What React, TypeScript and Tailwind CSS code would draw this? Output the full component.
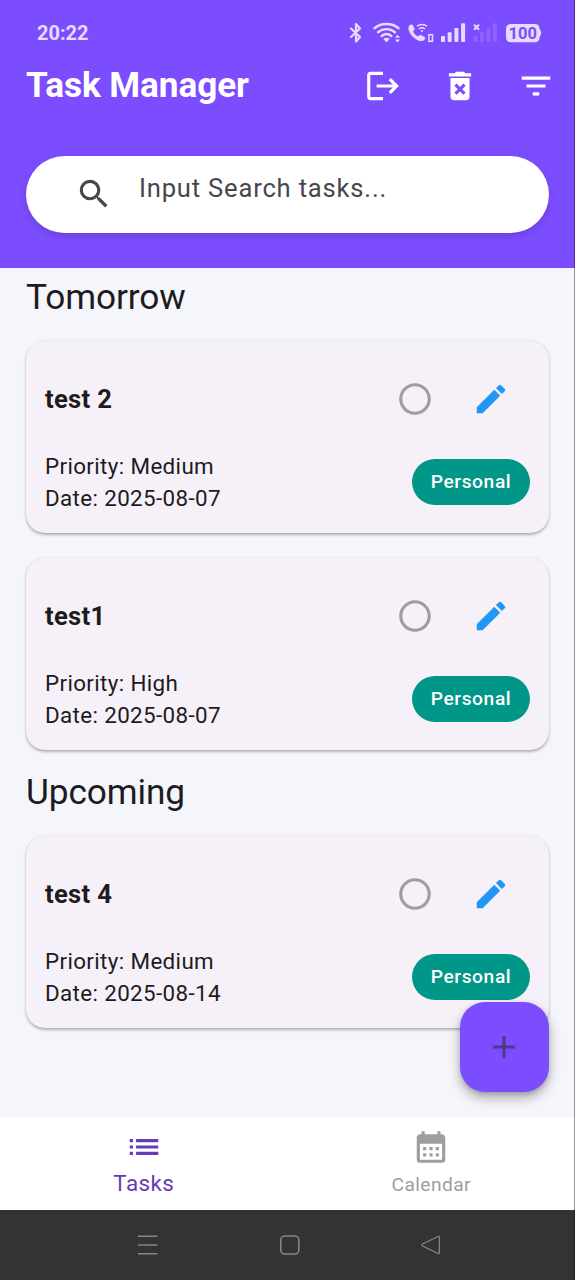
import React from "react";

const PATHS = {
  logout:
    "M17 7l-1.41 1.41L18.17 11H8v2h10.17l-2.58 2.58L17 17l5-5zM4 5h8V3H4c-1.1 0-2 .9-2 2v14c0 1.1.9 2 2 2h8v-2H4V5z",
  deleteForever:
    "M6 19c0 1.1.9 2 2 2h8c1.1 0 2-.9 2-2V7H6v12zm2.46-7.12l1.41-1.41L12 12.59l2.12-2.12 1.41 1.41L13.41 14l2.12 2.12-1.41 1.41L12 15.41l-2.12 2.12-1.41-1.41L10.59 14l-2.13-2.12zM15.5 4l-1-1h-5l-1 1H5v2h14V4z",
  filter: "M10 18h4v-2h-4v2zM3 6v2h18V6H3zm3 7h12v-2H6v2z",
  search:
    "M15.5 14h-.79l-.28-.27A6.471 6.471 0 0 0 16 9.5 6.5 6.5 0 1 0 9.5 16c1.61 0 3.09-.59 4.23-1.57l.27.28v.79l5 4.99L20.49 19l-4.99-5zm-6 0C7.01 14 5 11.99 5 9.5S7.01 5 9.5 5 14 7.01 14 9.5 11.99 14 9.5 14z",
  circle:
    "M12 2C6.48 2 2 6.48 2 12s4.48 10 10 10 10-4.48 10-10S17.52 2 12 2zm0 18c-4.42 0-8-3.58-8-8s3.58-8 8-8 8 3.58 8 8-3.58 8-8 8z",
  edit: "M3 17.25V21h3.75L17.81 9.94l-3.75-3.75L3 17.25zM20.71 7.04c.39-.39.39-1.02 0-1.41l-2.34-2.34a.9959.9959 0 0 0-1.41 0l-1.83 1.83 3.75 3.75 1.83-1.83z",
  plus: "M19 13h-6v6h-2v-6H5v-2h6V5h2v6h6v2z",
  list: "M3 13h2v-2H3v2zm0 4h2v-2H3v2zm0-8h2V7H3v2zm4 4h14v-2H7v2zm0 4h14v-2H7v2zM7 7v2h14V7H7z",
  calendar:
    "M19 4h-1V2h-2v2H8V2H6v2H5c-1.11 0-1.99.9-1.99 2L3 20c0 1.1.89 2 2 2h14c1.1 0 2-.9 2-2V6c0-1.1-.9-2-2-2zm0 16H5V10h14v10zM9 14H7v-2h2v2zm4 0h-2v-2h2v2zm4 0h-2v-2h2v2zm-8 4H7v-2h2v2zm4 0h-2v-2h2v2zm4 0h-2v-2h2v2z",
};

function Icon({ name, className = "" }: { name: keyof typeof PATHS; className?: string }) {
  return (
    <svg viewBox="0 0 24 24" fill="currentColor" className={`size-[38px] shrink-0 ${className}`}>
      <path d={PATHS[name]} />
    </svg>
  );
}

function StatusIcons() {
  return (
    <svg viewBox="345 20 200 26" className="h-[26px] w-[200px] text-[#e6dbff]" fill="none" stroke="currentColor">
      <path d="M351 28.500l9 8.500-4 4.500V24l4 4.500-9 8.500" strokeWidth="2.200" strokeLinejoin="round" strokeLinecap="round" />
      <g strokeWidth="2.400" strokeLinecap="round">
        <path d="M374.500 28.200c6.800-5.600 17.200-5.600 24 0" />
        <path d="M378 32.200c5-4.100 12-4.100 17 0" />
        <path d="M381.600 36c3-2.400 6.800-2.400 9.800 0" />
      </g>
      <path d="M383.300 38.800c2-1.400 4.400-1.400 6.400 0l-3.200 3.700z" fill="currentColor" stroke="none" />
      <path d="M395 37.800l2.500-3 2.500 3zM395 39.500l2.500 3 2.500-3z" fill="currentColor" stroke="none" />
      <path
        d="M410 25c1.400-1 2.500-.6 3.200.8l1.300 2.700c.5 1.200-.8 2-1.400 3 1 2.300 2.600 3.900 4.800 5 1-.7 1.900-1.900 3.100-1.400l3.200 1.600c1.300.7 1.400 1.700.4 2.800-2 2.300-4.800 1.900-7.800.2-4.200-2.400-7-5.600-8.200-9.900-.5-2.100 0-3.700 1.400-4.800z"
        fill="currentColor"
        stroke="none"
      />
      <path d="M417 26.300c2.900-2.500 7.100-2.500 10 0M419 29c1.900-1.500 4.100-1.500 6 0" strokeWidth="1.500" />
      <circle cx="422" cy="31" r="1.100" fill="currentColor" stroke="none" />
      <rect x="428.900" y="34.700" width="3.600" height="6.600" strokeWidth="1.500" />
      <g fill="currentColor" stroke="none">
        <rect x="441" y="36" width="4" height="6" rx="1" />
        <rect x="447.700" y="32.300" width="4" height="9.700" rx="1" />
        <rect x="454.400" y="28" width="4" height="14" rx="1" />
        <rect x="461.100" y="23.200" width="4" height="18.800" rx="1" />
      </g>
      <g fill="#8d63ff" stroke="none">
        <rect x="473.500" y="36" width="4" height="6" rx="1" />
        <rect x="480" y="32.300" width="4" height="9.700" rx="1" />
        <rect x="486.500" y="28" width="4" height="14" rx="1" />
        <rect x="493" y="23.200" width="4" height="18.800" rx="1" />
      </g>
      <path d="M474 24.700l5 5M479 24.700l-5 5" strokeWidth="2" />
      <rect x="506" y="24" width="33.500" height="18.300" rx="4.500" fill="currentColor" stroke="none" />
      <path d="M539 29c2.800.6 2.800 7.400 0 8z" fill="currentColor" stroke="none" />
      <text
        x="522.800"
        y="39.200"
        textAnchor="middle"
        fill="#7c4dff"
        stroke="none"
        className="font-[Roboto,sans-serif] text-[16.500px] font-bold"
      >
        100
      </text>
    </svg>
  );
}

function TaskCard({ title, priority, date }: { title: string; priority: string; date: string }) {
  return (
    <article className="flex h-[192px] flex-col rounded-[19px] bg-[#f6f1f9] px-[19px] pt-[38px] shadow-[0_1.500px_3px_rgba(0,0,0,0.25),0_1px_2px_rgba(0,0,0,0.08)]">
      <div className="flex h-[40px] items-center">
        <h3 className="flex-1 text-[25.600px] font-bold tracking-[0.300px]">{title}</h3>
        <Icon name="circle" className="mr-[38px] text-[#9e9e9e]" />
        <Icon name="edit" className="mr-[20px] text-[#2196f3]" />
      </div>
      <div className="flex pt-[31px]">
        <div className="flex-1 text-[22.400px] leading-8 tracking-[0.360px]">
          <p>Priority: {priority}</p>
          <p>Date: {date}</p>
        </div>
        <span className="mt-[9px] flex h-[46px] w-[118px] items-center justify-center rounded-full bg-[#009688] text-[19.200px] font-medium tracking-[0.600px] text-white">
          Personal
        </span>
      </div>
    </article>
  );
}

export default function App() {
  return (
    <div className="relative flex h-[1280px] w-[575px] flex-col overflow-hidden bg-[#f4f6fb] font-[Roboto,sans-serif] text-[#1d1b20]">
      <header className="h-[268px] shrink-0 bg-[#7c4dff] px-[26px] pt-5">
        <div className="flex h-[26px] items-center justify-between pl-[11px]">
          <span className="font-[Roboto,sans-serif] text-[20px] font-bold text-[#e6dbff]">20:22</span>
          <div className="mr-[4px]">
            <StatusIcons />
          </div>
        </div>
        <div className="mt-[19px] flex h-[42px] items-center text-white">
          <h1 className="-mt-[2px] flex-1 text-[35.200px] font-bold tracking-[-0.080px]">Task Manager</h1>
          <Icon name="logout" className="mr-[39px]" />
          <Icon name="deleteForever" className="mr-[38px]" />
          <Icon name="filter" className="-mr-[6px]" />
        </div>
        <div className="mt-[49px] flex h-[77px] rounded-full bg-white pl-[49px] pt-[19px] text-[#49454f] shadow-[0_3px_8px_rgba(0,0,0,0.15)]">
          <Icon name="search" />
          <span className="ml-[26px] -mt-[3px] text-[25.600px] leading-8 tracking-[0.800px]">Input Search tasks...</span>
        </div>
      </header>

      <main className="h-[849px] shrink-0 px-[26px]">
        <h2 className="flex h-[73px] items-start pt-[8px] text-[35.200px] leading-[42px] tracking-[-0.080px]">Tomorrow</h2>
        <div className="flex flex-col gap-[25px]">
          <TaskCard title="test 2" priority="Medium" date="2025-08-07" />
          <TaskCard title="test1" priority="High" date="2025-08-07" />
        </div>
        <h2 className="flex h-[86px] items-start pt-[21px] text-[35.200px] leading-[42px] tracking-[-0.080px]">Upcoming</h2>
        <TaskCard title="test 4" priority="Medium" date="2025-08-14" />
      </main>

      <nav className="flex h-[93px] shrink-0 bg-white">
        <div className="flex flex-1 flex-col items-center pt-[11px] text-[#673ab7]">
          <Icon name="list" />
          <span className="mt-[1px] text-[22.400px] leading-[32px] tracking-[0.400px]">Tasks</span>
        </div>
        <div className="flex flex-1 flex-col items-center pt-[11px] text-[#9e9e9e]">
          <Icon name="calendar" />
          <span className="mt-[4px] text-[19.200px] leading-[30px] tracking-[0.400px]">Calendar</span>
        </div>
      </nav>

      <footer className="flex h-[70px] shrink-0 items-center bg-[#333333] text-[#858585]">
        <svg viewBox="0 0 575 70" className="h-[70px] w-full" fill="none" stroke="currentColor" strokeWidth="1.600">
          <path d="M138 26.200h19.500M138 35h19.500M138 43.800h19.500" />
          <rect x="280.800" y="26" width="18" height="18" rx="4" />
          <path d="M438 26.500L422.600 34q-1.400 1 0 2L438 43.500q1.400.4 1.400-1.200V27.700q0-1.600-1.400-1.200z" strokeWidth="1.300" />
        </svg>
      </footer>

      <button className="absolute left-[460px] top-[1002px] flex h-[90px] w-[89px] items-center justify-center rounded-[25px] bg-[#7c4dff] pr-[1px] text-[#4f378a] shadow-[0_6px_12px_rgba(0,0,0,0.3),0_2px_4px_rgba(0,0,0,0.12)]">
        <Icon name="plus" />
      </button>
      <div className="absolute right-0 top-0 h-full w-px bg-black/40" />
    </div>
  );
}
